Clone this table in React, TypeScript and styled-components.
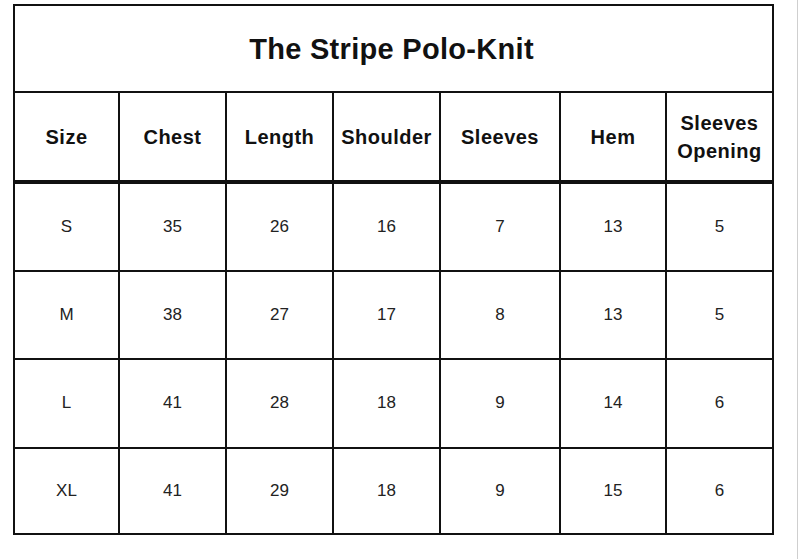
import React from "react";
import styled, { createGlobalStyle } from "styled-components";

const GlobalStyle = createGlobalStyle`
  html, body {
    margin: 0;
    padding: 0;
    background: #ffffff;
  }
  body {
    font-family: "Liberation Sans", Arial, sans-serif;
    color: #111;
  }
`;

const Page = styled.div`
  width: 798px;
  height: 559px;
  border-right: 1px solid #cfcfcf;
  padding: 4px 0 0 13px;
  box-sizing: border-box;
`;

const Chart = styled.div`
  display: grid;
  grid-template-columns: 105px 107px 107px 107px 120px 106px 107px;
  grid-template-rows: 87px 91px 88px 88px 89px 86px;
  width: max-content;
  border-left: 2px solid #111;
  border-top: 2px solid #111;
`;

const Cell = styled.div<{ $head?: boolean }>`
  box-sizing: border-box;
  border-right: 2px solid #111;
  border-bottom: ${(p) => (p.$head ? "4px" : "2px")} solid #111;
  display: flex;
  align-items: center;
  justify-content: center;
  text-align: center;
  font-size: ${(p) => (p.$head ? "20px" : "17px")};
  font-weight: ${(p) => (p.$head ? 700 : 400)};
  letter-spacing: ${(p) => (p.$head ? "0.5px" : "0")};
  line-height: 28px;
  color: ${(p) => (p.$head ? "#111" : "#222")};
  padding-bottom: ${(p) => (p.$head ? "0" : "1px")};
`;

const Title = styled(Cell)`
  grid-column: 1 / -1;
  font-size: 29px;
  font-weight: 700;
  letter-spacing: 0.3px;
  color: #111;
  padding-bottom: 0;
  padding-right: 4px;
`;

const columns = ["Size", "Chest", "Length", "Shoulder", "Sleeves", "Hem", "Sleeves Opening"];

const rows = [
  ["S", "35", "26", "16", "7", "13", "5"],
  ["M", "38", "27", "17", "8", "13", "5"],
  ["L", "41", "28", "18", "9", "14", "6"],
  ["XL", "41", "29", "18", "9", "15", "6"],
];

const App: React.FC = () => {
  return (
    <>
      <GlobalStyle />
      <Page>
        <Chart>
          <Title>The Stripe Polo-Knit</Title>
          {columns.map((c) => (
            <Cell $head key={c}>
              {c === "Sleeves Opening" ? (
                <span>
                  Sleeves
                  <br />
                  Opening
                </span>
              ) : (
                c
              )}
            </Cell>
          ))}
          {rows.map((r) =>
            r.map((v, i) => <Cell key={r[0] + i}>{v}</Cell>)
          )}
        </Chart>
      </Page>
    </>
  );
};

export default App;
